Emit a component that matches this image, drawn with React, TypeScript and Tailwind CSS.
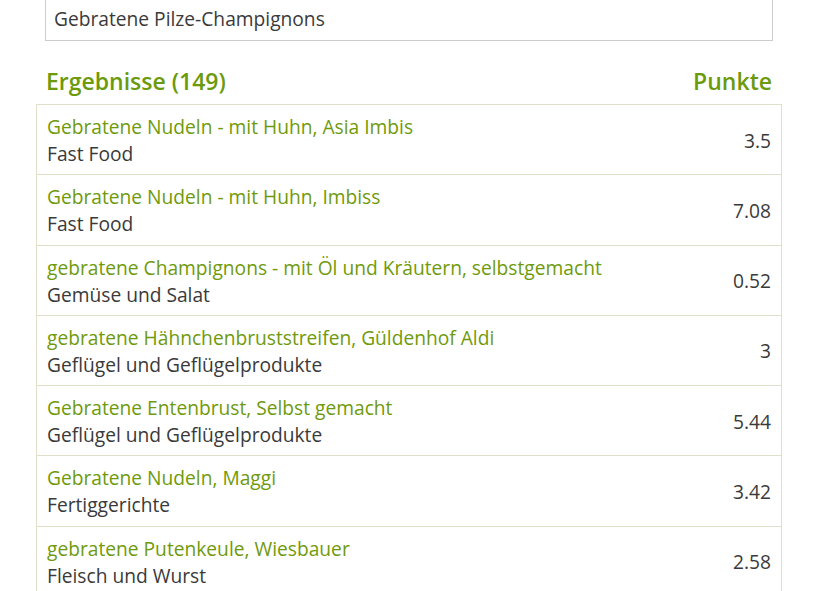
const rows = [
  { name: "Gebratene Nudeln - mit Huhn, Asia Imbis", cat: "Fast Food", pts: "3.5" },
  { name: "Gebratene Nudeln - mit Huhn, Imbiss", cat: "Fast Food", pts: "7.08" },
  { name: "gebratene Champignons - mit Öl und Kräutern, selbstgemacht", cat: "Gemüse und Salat", pts: "0.52" },
  { name: "gebratene Hähnchenbruststreifen, Güldenhof Aldi", cat: "Geflügel und Geflügelprodukte", pts: "3" },
  { name: "Gebratene Entenbrust, Selbst gemacht", cat: "Geflügel und Geflügelprodukte", pts: "5.44" },
  { name: "Gebratene Nudeln, Maggi", cat: "Fertiggerichte", pts: "3.42" },
  { name: "gebratene Putenkeule, Wiesbauer", cat: "Fleisch und Wurst", pts: "2.58" },
];

export default function App() {
  return (
    <div className="h-[591px] overflow-hidden bg-white font-['Open_Sans',sans-serif] text-[#3a3a3a]">
      <div className="w-[746px] ml-[36px]">
        <div className="mx-[9px] -mt-[10px] h-[51px] border border-[#cccccc] flex items-end pb-[6px] px-[8px] text-[19.2px]">
          Gebratene Pilze-Champignons
        </div>
        <div className="mx-[10px] mt-[25px] mb-[7px] flex justify-between text-[23px] font-semibold text-[#6b9a0b] leading-[31px]">
          <span>Ergebnisse (149)</span>
          <span>Punkte</span>
        </div>
        <div className="border-l border-r border-t border-[#e0dfc8]">
          {rows.map((r) => (
            <div key={r.name} className="flex items-center justify-between border-b border-[#e0dfc8] pl-[10px] pr-[10px] pt-[8px] pb-[7.3px] text-[19.2px] leading-[27px]">
              <div>
                <div className="text-[#6f9a0b]">{r.name}</div>
                <div>{r.cat}</div>
              </div>
              <div>{r.pts}</div>
            </div>
          ))}
        </div>
      </div>
    </div>
  );
}
